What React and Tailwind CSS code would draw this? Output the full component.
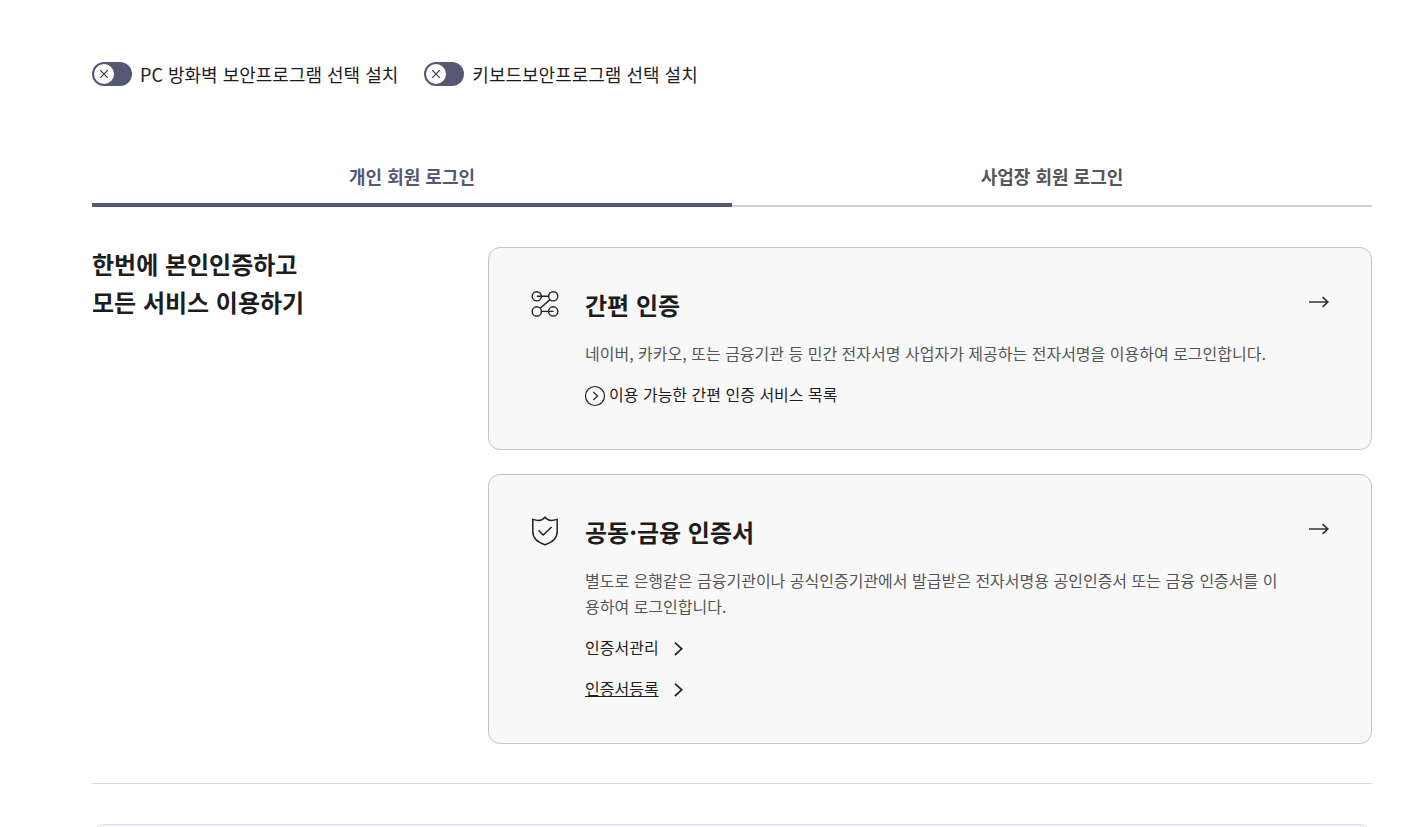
import { useState } from "react";

function SecurityToggle({ label }) {
  const [on, setOn] = useState(false);
  return (
    <label className="flex cursor-pointer items-center gap-2 text-lg leading-6 text-[#1d1d1d]">
      <input
        type="checkbox"
        role="switch"
        className="sr-only"
        checked={on}
        onChange={(e) => setOn(e.target.checked)}
      />
      <span className={`flex h-6 w-10 items-center rounded-full bg-[#555872] px-0.5 ${on ? "justify-end" : ""}`}>
        <span className="flex size-5 items-center justify-center rounded-full bg-white">
          <svg viewBox="0 0 20 20" className="size-5" fill="none" stroke="#3c3c3c" strokeWidth="1.2" aria-hidden="true">
            {on ? <path d="M6 10l3 3 5-6" /> : <path d="M6.2 6.2l7.6 7.6M13.8 6.2l-7.6 7.6" />}
          </svg>
        </span>
      </span>
      {label}
    </label>
  );
}

function NodesIcon() {
  return (
    <svg viewBox="0 0 32 32" className="size-8 shrink-0" fill="none" stroke="#222" strokeWidth="1.4" aria-hidden="true">
      <circle cx="7.8" cy="8.3" r="4.6" />
      <circle cx="24.2" cy="8.3" r="4.6" />
      <circle cx="7.8" cy="23.4" r="4.6" />
      <circle cx="24.2" cy="23.4" r="4.6" />
      <path d="M7.8 8.3h11.8M21 11.6l-9.800 8.600M12.400 23.400H24.600" />
    </svg>
  );
}

function ShieldIcon() {
  return (
    <svg viewBox="0 0 32 32" className="size-8 shrink-0" fill="none" stroke="#222" strokeWidth="1.5" aria-hidden="true">
      <path d="M16 2.2c-1.8 2.2-3.8 3.2-6.2 3.2-2 0-4-.4-6-1v12.2C3.800 23 8.500 27.500 16 29.800c7.500-2.300 12.200-6.800 12.200-13.200V4.400c-2 .6-4 1-6 1-2.400 0-4.400-1-6.200-3.200z" />
      <path d="M9.600 15.400l4.600 4.600 8.400-8" />
    </svg>
  );
}

function ArrowIcon() {
  return (
    <svg viewBox="0 0 24 28" className="h-7 w-6 shrink-0" fill="none" stroke="#333" strokeWidth="1.7" aria-hidden="true">
      <path d="M2 14h19M15.600 9.200l5.200 4.800-5.200 4.800" />
    </svg>
  );
}

function ChevronIcon() {
  return (
    <svg viewBox="0 0 16 16" className="size-4" fill="none" stroke="#222" strokeWidth="1.7" aria-hidden="true">
      <path d="M3.900 2.600l6.800 6.200-6.800 6.200" />
    </svg>
  );
}

function CircleChevronIcon() {
  return (
    <svg viewBox="0 0 20 20" className="size-5 overflow-visible" fill="none" stroke="#222" aria-hidden="true">
      <circle cx="10" cy="11" r="9.500" strokeWidth="1.200" />
      <path d="M8.200 7l4.400 4-4.400 4" strokeWidth="1.200" />
    </svg>
  );
}

function LoginCard({ icon, title, description, children }) {
  return (
    <article className="flex items-start gap-6 rounded-xl border border-[#c4c4c4] bg-[#f8f8f8] px-10 pt-10 pb-[42px]">
      {icon}
      <div className="min-w-0 flex-1">
        <h3 className="text-2xl leading-[34px] font-bold">{title}</h3>
        <p className="mt-[18px] leading-[26px] text-[#555]">{description}</p>
        <div className="mt-4 flex flex-col items-start gap-4 leading-[25px]">{children}</div>
      </div>
      <a href="#login" aria-label={title}>
        <ArrowIcon />
      </a>
    </article>
  );
}

const tabs = ["개인 회원 로그인", "사업장 회원 로그인"];

export default function App() {
  const [active, setActive] = useState(0);
  return (
    <main
      lang="ko"
      className="flex h-screen flex-col overflow-hidden bg-white pt-[62px] pr-[35px] pl-[92px] font-['Noto_Sans_CJK_KR',sans-serif] text-base text-[#1d1d1d]"
    >
      <div className="flex shrink-0 flex-wrap gap-[26px]">
        <SecurityToggle label="PC 방화벽 보안프로그램 선택 설치" />
        <SecurityToggle label="키보드보안프로그램 선택 설치" />
      </div>

      <div role="tablist" className="mt-[61px] grid shrink-0 grid-cols-2">
        {tabs.map((tab, i) => (
          <button
            key={tab}
            type="button"
            role="tab"
            aria-selected={active === i}
            onClick={() => setActive(i)}
            className={`flex h-[60px] cursor-pointer items-center justify-center pt-0.5 text-lg font-bold ${
              active === i ? "border-b-4 border-[#555872] text-[#555872]" : "border-b-2 border-[#d0d0d0] pb-0.5 text-[#555]"
            }`}
          >
            {tab}
          </button>
        ))}
      </div>

      <section className="flex shrink-0 border-b border-[#d8d8d8] pt-10 pb-[39px]">
        <h2 className="flex w-[396px] shrink-0 flex-col gap-1 text-2xl leading-[34px] font-bold">
          <span>한번에 본인인증하고</span>
          <span>모든 서비스 이용하기</span>
        </h2>
        <div className="flex min-w-0 flex-1 flex-col gap-6">
          <LoginCard
            icon={<NodesIcon />}
            title="간편 인증"
            description="네이버, 카카오, 또는 금융기관 등 민간 전자서명 사업자가 제공하는 전자서명을 이용하여 로그인합니다."
          >
            <a href="#services" className="flex items-center gap-1">
              <CircleChevronIcon />
              이용 가능한 간편 인증 서비스 목록
            </a>
          </LoginCard>
          <LoginCard
            icon={<ShieldIcon />}
            title="공동·금융 인증서"
            description="별도로 은행같은 금융기관이나 공식인증기관에서 발급받은 전자서명용 공인인증서 또는 금융 인증서를 이용하여 로그인합니다."
          >
            <a href="#manage" className="flex items-center gap-3">
              인증서관리
              <ChevronIcon />
            </a>
            <a href="#register" className="flex items-center gap-3">
              <span className="underline">인증서등록</span>
              <ChevronIcon />
            </a>
          </LoginCard>
        </div>
      </section>

      <div className="mt-10 h-24 shrink-0 rounded-xl border border-[#e0e0e0] bg-[#f4f5fa]" />
    </main>
  );
}
